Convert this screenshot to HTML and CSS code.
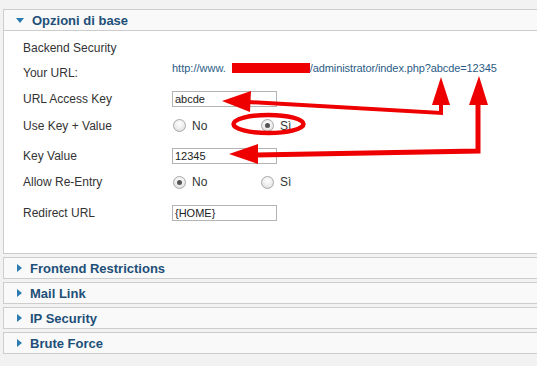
FILE: index.html
```html
<!DOCTYPE html>
<html lang="it">
<head>
<meta charset="utf-8">
<title>Opzioni</title>
<link rel="stylesheet" href="styles.css">
</head>
<body>
<div class="page">
  <section class="panel open">
    <div class="panel-head"><span class="tri down"></span><span class="title">Opzioni di base</span></div>
    <div class="panel-body">
      <div class="row r1"><div class="label">Backend Security</div></div>
      <div class="row r2"><div class="label">Your URL:</div><div class="url">http://www.<span class="redact"></span><span class="path">/administrator/index.php?abcde=12345</span></div></div>
      <div class="row r3"><div class="label">URL Access Key</div><div class="field"><input class="txt" type="text" value="abcde"></div></div>
      <div class="row r4"><div class="label">Use Key + Value</div>
        <div class="radios">
          <label class="opt"><input type="radio" name="usekey"><span>No</span></label>
          <label class="opt"><input type="radio" name="usekey" checked><span>Sì</span></label>
        </div>
      </div>
      <div class="row r5"><div class="label">Key Value</div><div class="field"><input class="txt" type="text" value="12345"></div></div>
      <div class="row r6"><div class="label">Allow Re-Entry</div>
        <div class="radios">
          <label class="opt"><input type="radio" name="reentry" checked><span>No</span></label>
          <label class="opt"><input type="radio" name="reentry"><span>Sì</span></label>
        </div>
      </div>
      <div class="row r7"><div class="label">Redirect URL</div><div class="field"><input class="txt" type="text" value="{HOME}"></div></div>
    </div>
  </section>
  <section class="panel"><div class="panel-head"><span class="tri right"></span><span class="title">Frontend Restrictions</span></div></section>
  <section class="panel"><div class="panel-head"><span class="tri right"></span><span class="title">Mail Link</span></div></section>
  <section class="panel"><div class="panel-head"><span class="tri right"></span><span class="title">IP Security</span></div></section>
  <section class="panel"><div class="panel-head"><span class="tri right"></span><span class="title">Brute Force</span></div></section>
</div>
<svg class="notes" width="537" height="366" viewBox="0 0 537 366" xmlns="http://www.w3.org/2000/svg">
  <g fill="none" stroke="#ee0000" stroke-linejoin="miter">
    <polyline points="441,100 441,113 248,102" stroke-width="4"/>
    <polyline points="478,100 478,151 256,155" stroke-width="5"/>
    <ellipse cx="268.5" cy="124" rx="35" ry="9" stroke-width="4.5"/>
  </g>
  <g fill="#ee0000">
    <polygon points="441,77 450,105 432,105"/>
    <polygon points="479,76 488,105 469,105"/>
    <polygon points="222,101 251,91 250,112"/>
    <polygon points="229,154 258,144 258,164"/>
  </g>
</svg>
</body>
</html>
```
FILE: styles.css
```css
html, body {
  margin: 0;
  padding: 0;
}
body {
  background: #f2f2f2;
  font-family: "Liberation Sans", Arial, sans-serif;
  width: 537px;
  height: 366px;
  overflow: hidden;
  position: relative;
}
.page {
  padding: 9px 0 0 3px;
  width: 560px;
}
.panel {
  border: 1px solid #cdcdcd;
  background: #f9f9f9;
  margin-bottom: 3px;
}
.panel-head {
  height: 20px;
  display: flex;
  align-items: center;
  padding-left: 12px;
}
.open .panel-head {
  border-bottom: 1px solid #cdcdcd;
}
.title {
  font-weight: bold;
  font-size: 13px;
  color: #214f78;
  margin-left: 8px;
}
.tri {
  width: 0;
  height: 0;
  display: block;
}
.tri.right {
  border-top: 4px solid transparent;
  border-bottom: 4px solid transparent;
  border-left: 5px solid #2b7bb0;
  margin-left: 1px;
}
.tri.down {
  border-left: 4px solid transparent;
  border-right: 4px solid transparent;
  border-top: 5px solid #2b7bb0;
  margin-top: 1px;
}
.panel-body {
  background: #ffffff;
  padding: 7px 0 20px 0;
}
.row {
  display: flex;
  align-items: center;
  font-size: 12px;
  color: #333333;
}
.label {
  width: 149px;
  padding-left: 19px;
  flex-shrink: 0;
}
.r1 { height: 20px; }
.r2 { height: 29px; }
.r3 { height: 24px; }
.r4 { height: 29px; }
.r5 { height: 31px; }
.r6 { height: 22px; }
.r7 { height: 40px; }
.url {
  font-size: 11px;
  color: #2b5c86;
  margin-bottom: 9px;
  white-space: nowrap;
}
.path {
  letter-spacing: -0.1px;
}
.redact {
  display: inline-block;
  width: 78px;
  height: 10px;
  background: #ee0000;
  vertical-align: -1px;
  margin: 0 0 0 6px;
}
.txt {
  box-sizing: border-box;
  width: 105px;
  height: 16px;
  border: 1px solid #b4b4b4;
  padding: 0 2px;
  margin: 0;
  font-family: "Liberation Sans", Arial, sans-serif;
  font-size: 11px;
  color: #222222;
  background: #ffffff;
  outline: none;
}
.radios {
  display: flex;
  align-items: center;
  padding-left: 1px;
}
.opt {
  display: flex;
  align-items: center;
  width: 88px;
}
.opt input {
  appearance: none;
  -webkit-appearance: none;
  width: 13px;
  height: 13px;
  margin: 0 6px 0 0;
  border: 1px solid #a8a8a8;
  border-radius: 50%;
  background: radial-gradient(circle at 50% 35%, #ffffff 0%, #ececec 55%, #d2d2d2 100%);
  box-sizing: border-box;
  position: relative;
}
.opt input:checked::after {
  content: "";
  position: absolute;
  left: 3px;
  top: 3px;
  width: 5px;
  height: 5px;
  border-radius: 50%;
  background: #555555;
}
.opt span {
  font-size: 12px;
  color: #333333;
}
.notes {
  position: absolute;
  left: 0;
  top: 0;
  pointer-events: none;
}
```
